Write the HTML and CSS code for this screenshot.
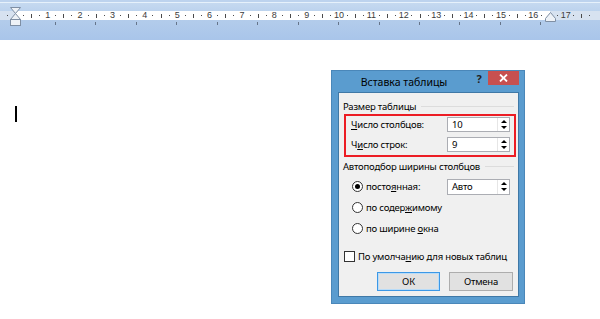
FILE: index.html
```html
<!DOCTYPE html>
<html lang="ru">
<head>
<meta charset="utf-8">
<title>Вставка таблицы</title>
<link rel="stylesheet" href="styles.css">
</head>
<body>
<div class="ruler">
  <div class="strip">
    <div class="marks">
      <span class="s"><i class="d"></i></span><span class="s"></span>
      <span class="s"><i class="d"></i></span><span class="s"><i class="l"></i></span><span class="s"><i class="d"></i></span><span class="s"><b>1</b></span>
      <span class="s"><i class="d"></i></span><span class="s"><i class="l"></i></span><span class="s"><i class="d"></i></span><span class="s"><b>2</b></span>
      <span class="s"><i class="d"></i></span><span class="s"><i class="l"></i></span><span class="s"><i class="d"></i></span><span class="s"><b>3</b></span>
      <span class="s"><i class="d"></i></span><span class="s"><i class="l"></i></span><span class="s"><i class="d"></i></span><span class="s"><b>4</b></span>
      <span class="s"><i class="d"></i></span><span class="s"><i class="l"></i></span><span class="s"><i class="d"></i></span><span class="s"><b>5</b></span>
      <span class="s"><i class="d"></i></span><span class="s"><i class="l"></i></span><span class="s"><i class="d"></i></span><span class="s"><b>6</b></span>
      <span class="s"><i class="d"></i></span><span class="s"><i class="l"></i></span><span class="s"><i class="d"></i></span><span class="s"><b>7</b></span>
      <span class="s"><i class="d"></i></span><span class="s"><i class="l"></i></span><span class="s"><i class="d"></i></span><span class="s"><b>8</b></span>
      <span class="s"><i class="d"></i></span><span class="s"><i class="l"></i></span><span class="s"><i class="d"></i></span><span class="s"><b>9</b></span>
      <span class="s"><i class="d"></i></span><span class="s"><i class="l"></i></span><span class="s"><i class="d"></i></span><span class="s"><b>10</b></span>
      <span class="s"><i class="d"></i></span><span class="s"><i class="l"></i></span><span class="s"><i class="d"></i></span><span class="s"><b>11</b></span>
      <span class="s"><i class="d"></i></span><span class="s"><i class="l"></i></span><span class="s"><i class="d"></i></span><span class="s"><b>12</b></span>
      <span class="s"><i class="d"></i></span><span class="s"><i class="l"></i></span><span class="s"><i class="d"></i></span><span class="s"><b>13</b></span>
      <span class="s"><i class="d"></i></span><span class="s"><i class="l"></i></span><span class="s"><i class="d"></i></span><span class="s"><b>14</b></span>
      <span class="s"><i class="d"></i></span><span class="s"><i class="l"></i></span><span class="s"><i class="d"></i></span><span class="s"><b>15</b></span>
      <span class="s"><i class="d"></i></span><span class="s"><i class="l"></i></span><span class="s"><i class="d"></i></span><span class="s"><b>16</b></span>
      <span class="s"><i class="d"></i></span><span class="s"><i class="l"></i></span><span class="s"><i class="d"></i></span><span class="s"><b>17</b></span>
      <span class="s"><i class="d"></i></span><span class="s"><i class="l"></i></span><span class="s"><i class="d"></i></span>
    </div>
  </div>
  <div class="tabs">
    <span></span><span></span><span></span><span></span><span></span><span></span><span></span>
    <span></span><span></span><span></span><span></span><span></span><span></span>
  </div>
  <svg class="indent-left" width="11" height="20" viewBox="0 0 11 20">
    <path d="M0.5 0.5 H10.5 L5.5 6.5 Z" fill="#eef2f7" stroke="#7f8fa4"/>
    <path d="M5.5 6.5 L10.5 12.5 H0.5 Z" fill="#eef2f7" stroke="#7f8fa4"/>
    <rect x="0.5" y="12.5" width="10" height="6" fill="#eef2f7" stroke="#7f8fa4"/>
  </svg>
  <svg class="indent-right" width="11" height="10" viewBox="0 0 11 10">
    <path d="M5.5 0.5 L10.5 6.5 V9.5 H0.5 V6.5 Z" fill="#eef2f7" stroke="#7f8fa4"/>
  </svg>
</div>

<main class="page">
  <span class="caret"></span>
</main>

<section class="dialog">
  <header class="titlebar">
    <span class="title">Вставка таблицы</span>
    <span class="help">?</span>
    <span class="close">
      <svg width="9" height="8" viewBox="0 0 9 8"><path d="M1 0.5 L8 7.5 M8 0.5 L1 7.5" stroke="#fff" stroke-width="1.8"/></svg>
    </span>
  </header>
  <div class="client">
    <div class="group">Размер таблицы<span class="rule"></span></div>
    <div class="redbox">
      <div class="row">
        <span><u>Ч</u>исло столбцов:</span>
        <div class="spin"><span class="val">10</span><span class="arrows"><i class="up"></i><i class="down"></i></span></div>
      </div>
      <div class="row">
        <span>Ч<u>и</u>сло строк:</span>
        <div class="spin"><span class="val">9</span><span class="arrows"><i class="up"></i><i class="down"></i></span></div>
      </div>
    </div>
    <div class="group g2">Автоподбор ширины столбцов<span class="rule"></span></div>
    <div class="opt">
      <span class="radio checked"></span><span>посто<u>я</u>нная:</span>
      <div class="spin auto"><span class="val">Авто</span><span class="arrows"><i class="up"></i><i class="down"></i></span></div>
    </div>
    <div class="opt">
      <span class="radio"></span><span>по содер<u>ж</u>имому</span>
    </div>
    <div class="opt">
      <span class="radio"></span><span>по ширине <u>о</u>кна</span>
    </div>
    <div class="check-row">
      <span class="check"></span><span>По умолча<u>н</u>ию для новых таблиц</span>
    </div>
    <div class="buttons">
      <span class="btn default">ОК</span>
      <span class="btn">Отмена</span>
    </div>
  </div>
</section>
</body>
</html>
```
FILE: styles.css
```css
html, body {
  margin: 0;
  padding: 0;
}
body {
  width: 600px;
  height: 319px;
  overflow: hidden;
  background: #ffffff;
  position: relative;
  font-family: "Noto Sans", "Open Sans", sans-serif;
}

/* ---------- ruler ---------- */
.ruler {
  position: relative;
  height: 40px;
  box-sizing: border-box;
  padding-top: 11px;
  background: linear-gradient(to bottom,
    #bdd3ee 0, #bdd3ee 2px,
    #e6f1fb 2px, #e6f1fb 3px,
    #c5d9f0 3px, #b3cceb 20px, #a9c5ea 40px);
}
.strip {
  height: 9px;
  background: linear-gradient(to right,
    #d7e2f0 0, #d7e2f0 15px,
    #ffffff 15px, #ffffff 550px,
    #d7e2f0 550px);
}
.marks {
  display: grid;
  grid-template-columns: repeat(73, 8.095px);
  padding-left: 3.2px;
  height: 9px;
}
.s {
  display: flex;
  justify-content: center;
  align-items: center;
  height: 9px;
}
.s > * { flex-shrink: 0; }
.d {
  width: 1px;
  height: 1px;
  background: #4a4a4a;
}
.l {
  width: 1px;
  height: 4px;
  background: #4a4a4a;
}
.s b {
  font-family: "Liberation Sans", sans-serif;
  font-weight: normal;
  font-size: 9px;
  line-height: 9px;
  color: #3b3b3b;
}
.tabs {
  display: flex;
  margin-top: 2px;
  padding-left: 15.3px;
  height: 3px;
}
.tabs span {
  width: 40.475px;
  flex-shrink: 0;
  box-sizing: border-box;
  border-right: 1px solid #66758a;
}
.indent-left {
  position: absolute;
  left: 10px;
  top: 7px;
}
.indent-right {
  position: absolute;
  left: 545px;
  top: 12px;
}

/* ---------- page ---------- */
.page {
  display: block;
  height: 279px;
  padding: 66px 0 0 15px;
  box-sizing: border-box;
}
.caret {
  display: block;
  width: 2px;
  height: 16px;
  background: #000;
}

/* ---------- dialog ---------- */
.dialog {
  position: absolute;
  left: 331px;
  top: 70px;
  width: 194px;
  height: 234px;
  box-sizing: border-box;
  background: #5a9ccf;
  border: 1px solid #4a87b9;
  padding: 0 5px 6px 6px;
  display: flex;
  flex-direction: column;
  font-family: "Noto Sans", sans-serif;
  font-size: 9.5px;
  letter-spacing: -0.2px;
  color: #000;
}
.titlebar {
  height: 21px;
  display: flex;
  align-items: flex-start;
  flex-shrink: 0;
}
.title {
  flex: 1;
  text-align: center;
  font-size: 10.5px;
  letter-spacing: 0;
  line-height: 22px;
  color: #000;
}
.help {
  width: 18px;
  text-align: center;
  font-size: 11px;
  font-weight: bold;
  line-height: 16px;
  color: #222;
}
.close {
  width: 31px;
  height: 14px;
  background: #c75050;
  display: flex;
  align-items: center;
  justify-content: center;
}
.client {
  flex: 1;
  background: #f0f0f0;
  border: 1px solid #3f78a6;
  padding-top: 5px;
  display: flex;
  flex-direction: column;
}
.group {
  height: 16px;
  display: flex;
  align-items: center;
  margin-left: 4px;
  margin-right: 4px;
  white-space: nowrap;
}
.group.g2 {
  height: 19px;
}
.rule {
  flex: 1;
  height: 1px;
  margin-left: 5px;
  background: #dcdcdc;
}
.redbox {
  margin-left: 5px;
  width: 172px;
  height: 43px;
  box-sizing: border-box;
  border: 2px solid #ec1c24;
  padding: 1px 4px 3px 5px;
  display: flex;
  flex-direction: column;
  gap: 5px;
}
.row {
  height: 15px;
  display: flex;
  align-items: center;
  justify-content: space-between;
}
.spin {
  width: 63px;
  height: 15px;
  box-sizing: border-box;
  border: 1px solid #abadb3;
  background: #fff;
  display: flex;
  align-items: stretch;
}
.spin.auto {
  height: 16px;
  margin-left: auto;
  margin-right: 8px;
}
.val {
  flex: 1;
  padding-left: 4px;
  line-height: 13px;
}
.arrows {
  width: 11px;
  display: flex;
  flex-direction: column;
  align-items: center;
  justify-content: space-evenly;
  border-left: 1px solid #e6e6e6;
}
.up {
  width: 0;
  height: 0;
  border-left: 3px solid transparent;
  border-right: 3px solid transparent;
  border-bottom: 3px solid #000;
}
.down {
  width: 0;
  height: 0;
  border-left: 3px solid transparent;
  border-right: 3px solid transparent;
  border-top: 3px solid #000;
}
.opt {
  height: 21px;
  display: flex;
  align-items: center;
  padding-left: 13px;
}
.radio {
  width: 11px;
  height: 11px;
  box-sizing: border-box;
  border: 1px solid #333;
  border-radius: 50%;
  background: #fff;
  margin-right: 3px;
  display: flex;
  align-items: center;
  justify-content: center;
}
.radio.checked::after {
  content: "";
  width: 5px;
  height: 5px;
  border-radius: 50%;
  background: #000;
}
.check-row {
  margin-top: 8px;
  height: 19px;
  display: flex;
  align-items: center;
  padding-left: 5px;
  white-space: nowrap;
}
.check {
  width: 11px;
  height: 11px;
  box-sizing: border-box;
  border: 1px solid #333;
  background: #fff;
  margin-right: 3px;
}
.buttons {
  margin-top: 6px;
  display: flex;
  gap: 9px;
  padding-left: 38px;
}
.btn {
  width: 64px;
  height: 19px;
  box-sizing: border-box;
  border: 1px solid #adadad;
  background: #e1e1e1;
  text-align: center;
  line-height: 17px;
}
.btn.default {
  width: 63px;
  border-color: #3c98e6;
  box-shadow: inset 0 0 0 1px #b9dcf8;
}
```
